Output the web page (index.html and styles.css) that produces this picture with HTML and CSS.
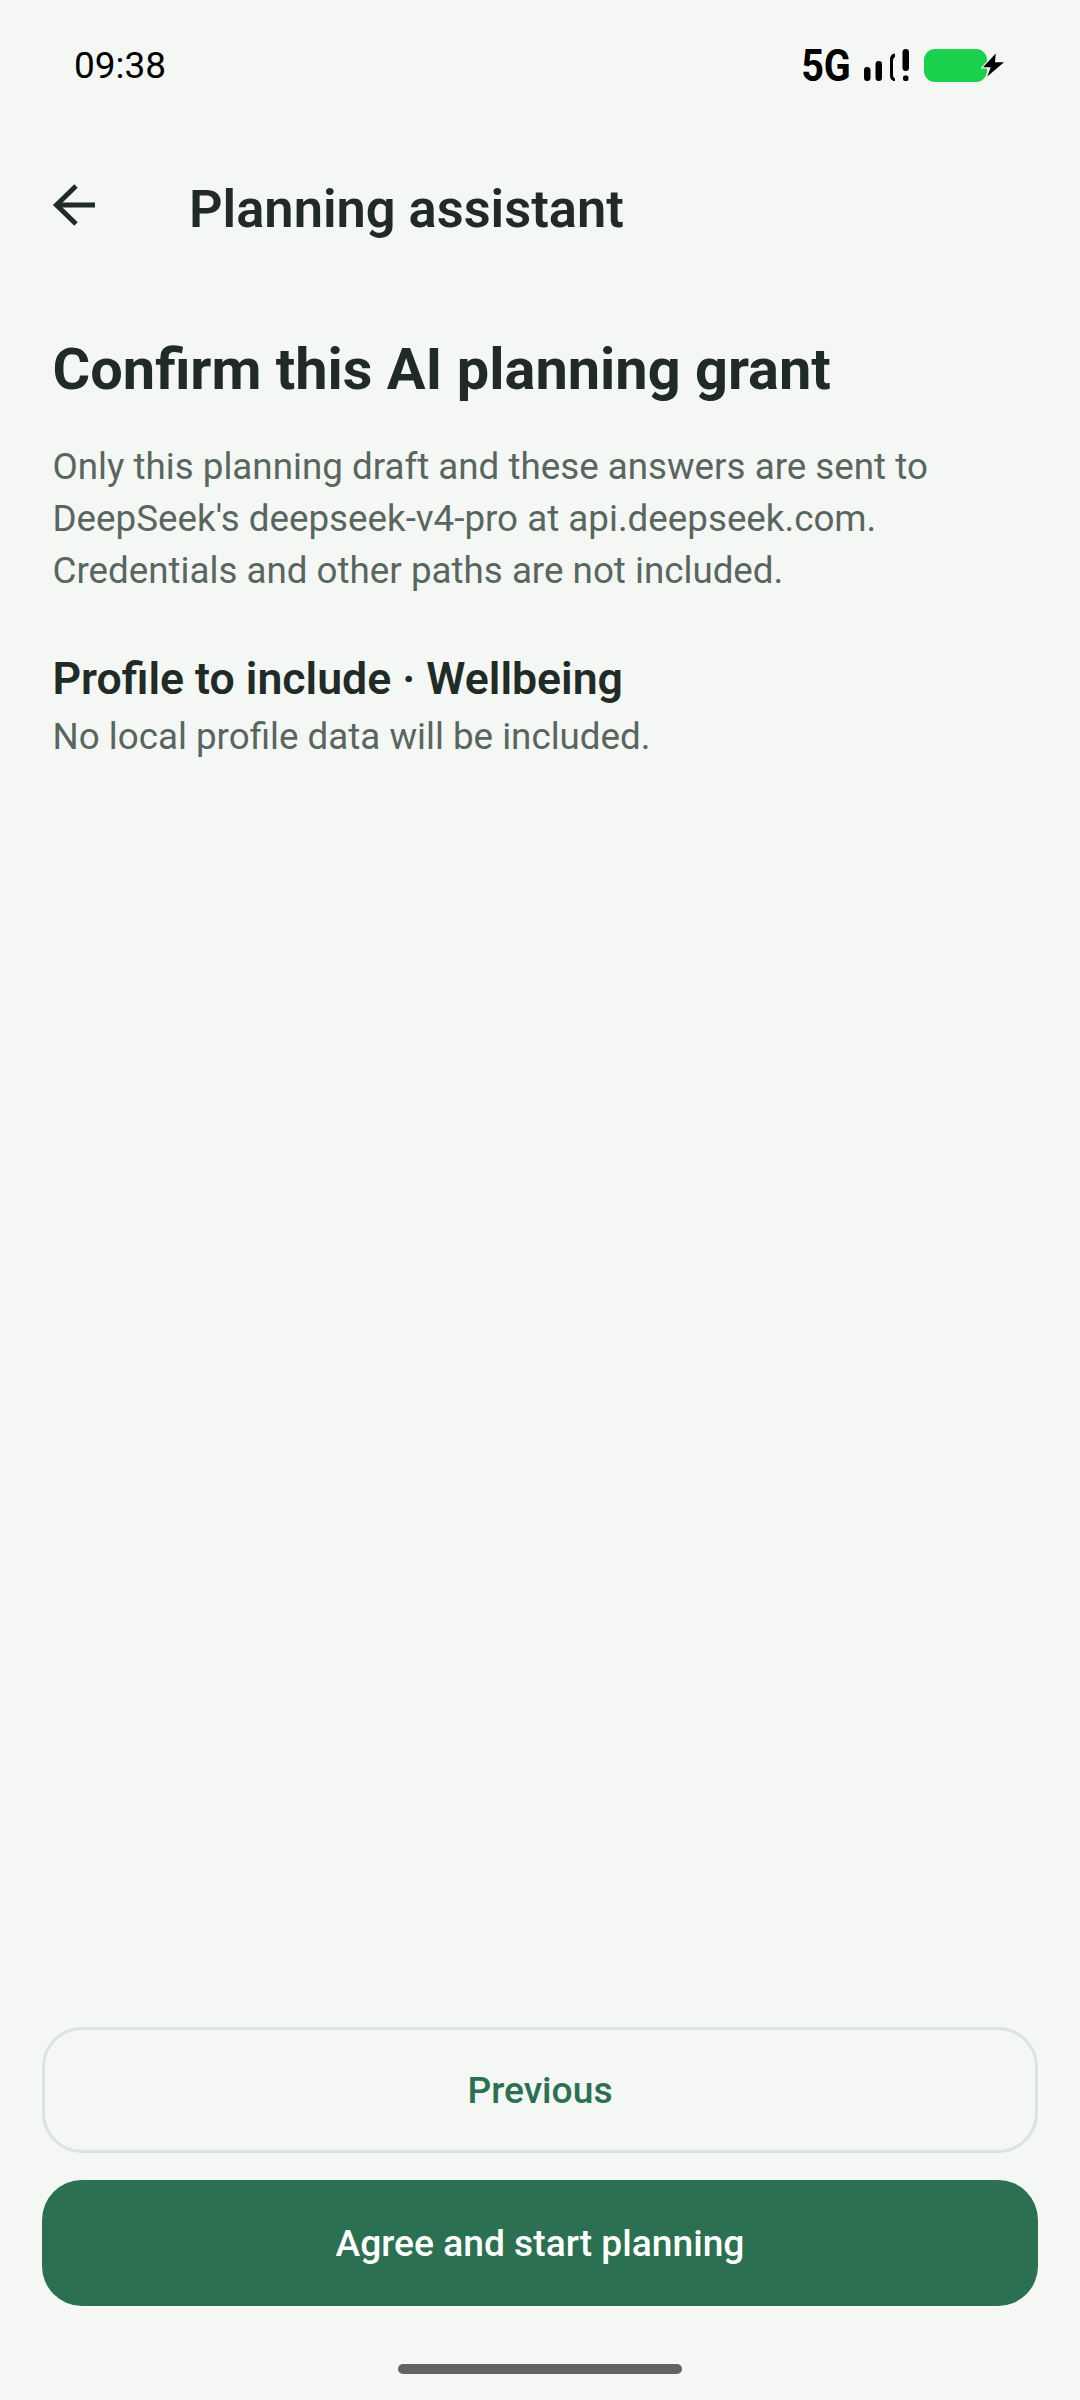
FILE: index.html
```html
<!DOCTYPE html>
<html lang="en">
  <head>
    <meta charset="UTF-8" />
    <meta name="viewport" content="width=device-width, initial-scale=1.0" />
    <title>Planning assistant</title>
    <link rel="stylesheet" href="styles.css">
  </head>
  <body>
    <div class="status-bar">
      <span class="clock">09:38</span>
      <div class="status-icons">
        <span class="net">5G</span>
        <svg class="signal" width="45" height="32" viewBox="0 0 45 32" fill="#000">
          <rect x="0" y="18" width="6.500" height="14" rx="3.250" />
          <rect x="11.500" y="12" width="6.500" height="20" rx="3.250" />
          <path d="M31 4.500v3.500c-1.500 .8-2 2.500-2 4.500v13c0 2 .5 3.300 2 4v2.500c-3.500 0-5-2.500-5-6v-15c0-3.500 1.500-6.500 5-6.500z" />
          <rect x="38.500" y="0" width="6.500" height="22" rx="3.250" />
          <rect x="39" y="26.500" width="5.500" height="5.500" rx="2" />
        </svg>
        <div class="battery">
          <div class="battery-fill"></div>
          <svg class="bolt" width="24" height="24" viewBox="0 0 24 24">
            <path d="M14.700 .5 2 14.300h7.700L6.300 23.500 23 9.300h-9l.7-8.800z" fill="#000" stroke="#f5f7f4" stroke-width="2.500" paint-order="stroke" />
          </svg>
        </div>
      </div>
    </div>

    <header class="app-bar">
      <button class="back" aria-label="Back">
        <svg class="back-icon" width="44" height="44" viewBox="0 0 44 44" fill="none" stroke="#212b26" stroke-width="5">
          <path d="M43 22H4" />
          <path d="M24 3 4.500 22 24 41" />
        </svg>
      </button>
      <h1>Planning assistant</h1>
    </header>

    <main class="content">
      <h2>Confirm this AI planning grant</h2>
      <p class="intro">Only this planning draft and these answers are sent to DeepSeek's deepseek-v4-pro at api.deepseek.com. Credentials and other paths are not included.</p>
      <section class="profile">
        <h3>Profile to include · Wellbeing</h3>
        <p>No local profile data will be included.</p>
      </section>
    </main>

    <footer class="actions">
      <button class="btn btn-outline">Previous</button>
      <button class="btn btn-primary">Agree and start planning</button>
      <div class="home-bar"></div>
    </footer>
  </body>
</html>
```

FILE: styles.css
```css
* {
  box-sizing: border-box;
}

html,
body {
  height: 100%;
}

body {
  margin: 0;
  background: #f5f7f4;
  color: #212b26;
  font-family: Roboto, sans-serif;
  display: flex;
  flex-direction: column;
  height: 2400px;
}

button {
  font-family: inherit;
  cursor: pointer;
}

.status-bar {
  height: 130px;
  padding: 0 75px 0 74px;
  display: flex;
  justify-content: space-between;
  align-items: center;
}

.clock {
  font-size: 37px;
  color: #000;
}

.status-icons {
  display: flex;
  align-items: center;
  gap: 15px;
}

.net {
  font-size: 45px;
  font-weight: 700;
  color: #000;
  width: 46px;
  display: flex;
  justify-content: center;
  transform: scaleX(0.88);
}

.battery {
  display: flex;
  align-items: center;
}

.battery-fill {
  width: 63px;
  height: 33px;
  border-radius: 11px;
  background: #1bd04c;
}

.bolt {
  margin-left: -6px;
}

.app-bar {
  height: 156px;
  padding: 0 52px;
  display: flex;
  align-items: center;
}

.back {
  width: 137px;
  padding: 0;
  border: 0;
  background: none;
  text-align: left;
}

.back-icon {
  display: block;
  margin-bottom: 6px;
}

.app-bar h1 {
  margin: 0;
  font-size: 52.400px;
  line-height: 58px;
  font-weight: 600;
  padding-top: 1px;
}

.content {
  flex: 1;
  padding: 50px 52.500px 0;
}

.content h2 {
  margin: 0;
  font-size: 57.700px;
  line-height: 66px;
  font-weight: 700;
}

.intro {
  margin: 39px 0 0;
  font-size: 36.750px;
  line-height: 52px;
  color: #58665f;
}

.profile {
  margin-top: 56px;
}

.profile h3 {
  margin: 0;
  font-size: 44.600px;
  line-height: 52px;
  font-weight: 600;
}

.profile p {
  margin: 8px 0 0;
  font-size: 36.750px;
  line-height: 48px;
  color: #58665f;
}

.actions {
  padding: 0 42px;
  display: flex;
  flex-direction: column;
}

.btn {
  height: 126px;
  border-radius: 40px;
  font-size: 37.200px;
  font-weight: 500;
}

.btn-outline {
  background: none;
  border: 3px solid #dde3df;
  color: #2a7051;
}

.btn-primary {
  margin-top: 27px;
  background: #2a7051;
  border: 0;
  color: #fff;
}

.home-bar {
  width: 284px;
  height: 10px;
  margin: 58px auto 26px;
  border-radius: 5px;
  background: #636363;
}
```
